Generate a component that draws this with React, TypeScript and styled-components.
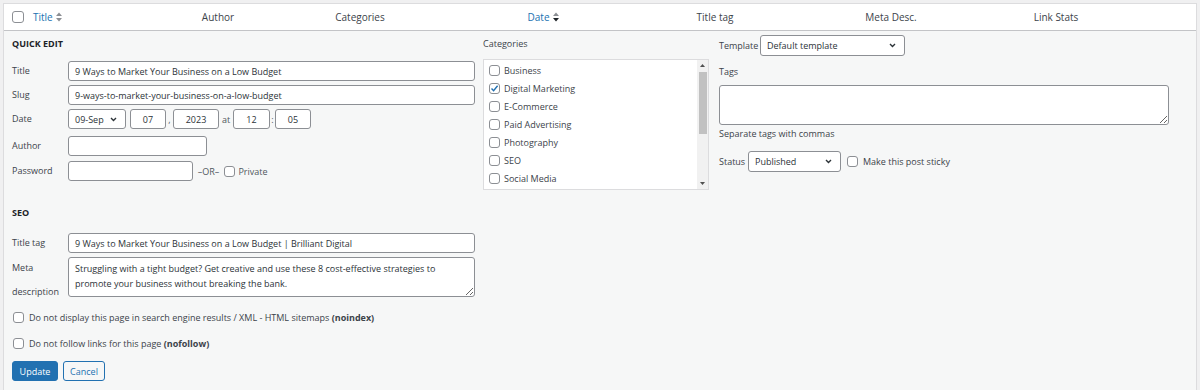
import React from "react"
import styled, { createGlobalStyle } from "styled-components"

const GlobalStyle = createGlobalStyle`
  body {
    margin: 0;
    background: #f0f0f1;
    font-family: "Open Sans", "Noto Sans", sans-serif;
    color: #3c434a;
  }
`

const Table = styled.div`
  margin: 3px 3px 0 3px;
  height: 387px;
  box-sizing: border-box;
  border: 1px solid #dcdcde;
  border-bottom: none;
  display: flex;
  flex-direction: column;
`

const HeaderRow = styled.div`
  display: grid;
  grid-template-columns: 29px 120px 130px 154px 212px 132px 220px 110px 1fr;
  align-items: center;
  height: 26px;
  flex-shrink: 0;
  background: #fff;
  border-bottom: 1px solid #c3c4c7;
  font-size: 10px;
  color: #3c434a;
`

const HeaderCell = styled.div<{ $center?: boolean; $link?: boolean }>`
  display: flex;
  align-items: center;
  justify-content: ${(p) => (p.$center ? "center" : "flex-start")};
  gap: 3px;
  color: ${(p) => (p.$link ? "#2271b1" : "#3c434a")};
`

const CheckCell = styled.div`
  padding-left: 8px;
  display: flex;
  align-items: center;
`

const Panel = styled.div`
  flex: 1;
  background: #f6f7f7;
  padding: 6px 0 0 8px;
  display: flex;
  gap: 8px;
  font-size: 9px;
`

const LeftCol = styled.div`
  width: 463px;
  display: flex;
  flex-direction: column;
`

const MidCol = styled.div`
  width: 226px;
  display: flex;
  flex-direction: column;
`

const RightCol = styled.div`
  width: 450px;
  margin-left: 2px;
  display: flex;
  flex-direction: column;
`

const SectionTitle = styled.div<{ $top?: number; $bottom?: number }>`
  font-weight: 700;
  font-size: 9px;
  line-height: 14px;
  text-transform: uppercase;
  color: #1d2327;
  margin-top: ${(p) => p.$top ?? 0}px;
  margin-bottom: ${(p) => p.$bottom ?? 0}px;
`

const Fields = styled.div`
  display: flex;
  flex-direction: column;
  gap: 4px;
`

const Row = styled.div<{ $top?: number }>`
  display: flex;
  align-items: center;
  margin-top: ${(p) => p.$top ?? 0}px;
`

const Label = styled.span<{ $width?: number }>`
  width: ${(p) => p.$width ?? 56}px;
  flex-shrink: 0;
  color: #3c434a;
  line-height: 14px;
`

const TallLabel = styled(Label)`
  line-height: 24px;
  height: 40px;
  align-self: flex-start;
  margin-top: -1px;
`

const TextInput = styled.input<{ $width?: number; $center?: boolean }>`
  box-sizing: border-box;
  height: 20px;
  width: ${(p) => (p.$width ? `${p.$width}px` : "100%")};
  flex: ${(p) => (p.$width ? "none" : 1)};
  margin: 0;
  padding: 0 6px;
  border: 1px solid #8c8f94;
  border-radius: 3px;
  background: #fff;
  font-family: inherit;
  font-size: 9px;
  color: #2c3338;
  text-align: ${(p) => (p.$center ? "center" : "left")};
  outline: none;
`

const TextArea = styled.textarea<{ $height: number }>`
  box-sizing: border-box;
  height: ${(p) => p.$height}px;
  flex: 1;
  width: 100%;
  margin: 0;
  padding: 3px 6px;
  border: 1px solid #8c8f94;
  border-radius: 3px;
  background: #fff;
  font-family: inherit;
  font-size: 9px;
  line-height: 15px;
  color: #2c3338;
  resize: vertical;
  outline: none;
  overflow: hidden;
`

const SelectBox = styled.div<{ $width: number; $height?: number }>`
  box-sizing: border-box;
  width: ${(p) => p.$width}px;
  height: ${(p) => p.$height ?? 20}px;
  flex-shrink: 0;
  padding: 0 8px 0 6px;
  border: 1px solid #8c8f94;
  border-radius: 3px;
  background: #fff;
  display: flex;
  align-items: center;
  justify-content: space-between;
  color: #2c3338;
`

const Sep = styled.span<{ $width: number }>`
  width: ${(p) => p.$width}px;
  text-align: center;
  flex-shrink: 0;
  color: #50575e;
`

const Box = styled.span<{ $size?: number }>`
  box-sizing: border-box;
  width: ${(p) => p.$size ?? 11}px;
  height: ${(p) => p.$size ?? 11}px;
  flex-shrink: 0;
  border: 1px solid #8c8f94;
  border-radius: 3px;
  background: #fff;
  display: inline-flex;
  align-items: center;
  justify-content: center;
`

const CheckRow = styled.div<{ $top: number }>`
  display: flex;
  align-items: center;
  gap: 5px;
  height: 14px;
  margin-top: ${(p) => p.$top}px;
  padding-left: 1px;
`

const Buttons = styled.div`
  display: flex;
  gap: 5px;
  margin-top: 11px;
`

const Button = styled.button<{ $primary?: boolean; $width: number }>`
  box-sizing: border-box;
  height: 20px;
  width: ${(p) => p.$width}px;
  padding: 0;
  border: 1px solid #2271b1;
  border-radius: 3px;
  background: ${(p) => (p.$primary ? "#2271b1" : "#f6f7f7")};
  color: ${(p) => (p.$primary ? "#fff" : "#2271b1")};
  font-family: inherit;
  font-size: 9px;
`

const CatLabel = styled.div`
  line-height: 14px;
`

const CatBox = styled.div`
  margin-top: 8px;
  height: 131px;
  box-sizing: border-box;
  border: 1px solid #dcdcde;
  background: #fff;
  display: flex;
  overflow: hidden;
`

const CatList = styled.ul`
  list-style: none;
  margin: 0;
  padding: 1px 0 0 5px;
  flex: 1;
`

const CatItem = styled.li`
  height: 18px;
  display: flex;
  align-items: center;
  gap: 4px;
  color: #3c434a;
`

const ScrollTrack = styled.div`
  width: 11px;
  background: #f1f1f1;
  display: flex;
  flex-direction: column;
  align-items: center;
`

const ScrollArrow = styled.div`
  height: 11px;
  display: flex;
  align-items: center;
  justify-content: center;
`

const ScrollThumb = styled.div`
  width: 8px;
  height: 62px;
  background: #c1c1c1;
  margin-top: 1px;
`

const Spacer = styled.div`
  flex: 1;
`

const Help = styled.div`
  line-height: 14px;
  margin-top: 2px;
  color: #3c434a;
`

const Chevron = () => (
  <svg width="7" height="5" viewBox="0 0 7 5">
    <path d="M1 1 L3.5 3.5 L6 1" fill="none" stroke="#2c3338" strokeWidth="1.4" />
  </svg>
)

const Tick = () => (
  <svg width="9" height="9" viewBox="0 0 9 9">
    <path d="M1.5 4.6 L3.6 6.8 L7.6 1.8" fill="none" stroke="#2271b1" strokeWidth="1.4" />
  </svg>
)

const SortIcon = ({ active }: { active?: boolean }) => (
  <svg width="6" height="10" viewBox="0 0 6 10">
    <path d="M0 4 L3 0.5 L6 4 Z" fill="#8c8f94" />
    <path d="M0 6 L3 9.5 L6 6 Z" fill={active ? "#1d2327" : "#8c8f94"} />
  </svg>
)

const Triangle = ({ up }: { up?: boolean }) => (
  <svg width="5" height="3" viewBox="0 0 5 3">
    <path d={up ? "M0 3 L2.5 0 L5 3 Z" : "M0 0 L2.5 3 L5 0 Z"} fill="#505050" />
  </svg>
)

const Checkbox = ({ checked, size }: { checked?: boolean; size?: number }) => (
  <Box $size={size}>{checked && <Tick />}</Box>
)

const categories = [
  { name: "Business" },
  { name: "Digital Marketing", checked: true },
  { name: "E-Commerce" },
  { name: "Paid Advertising" },
  { name: "Photography" },
  { name: "SEO" },
  { name: "Social Media" },
]

export default function App() {
  return (
    <>
      <GlobalStyle />
      <Table>
        <HeaderRow>
          <CheckCell>
            <Checkbox size={12} />
          </CheckCell>
          <HeaderCell $link>
            Title <SortIcon />
          </HeaderCell>
          <HeaderCell $center>Author</HeaderCell>
          <HeaderCell $center>Categories</HeaderCell>
          <HeaderCell $center $link>
            Date <SortIcon active />
          </HeaderCell>
          <HeaderCell $center>Title tag</HeaderCell>
          <HeaderCell $center>Meta Desc.</HeaderCell>
          <HeaderCell $center>Link Stats</HeaderCell>
          <div />
        </HeaderRow>

        <Panel>
          <LeftCol>
            <SectionTitle $bottom={10}>Quick Edit</SectionTitle>
            <Fields>
              <Row>
                <Label>Title</Label>
                <TextInput defaultValue="9 Ways to Market Your Business on a Low Budget" />
              </Row>
              <Row>
                <Label>Slug</Label>
                <TextInput defaultValue="9-ways-to-market-your-business-on-a-low-budget" />
              </Row>
              <Row>
                <Label>Date</Label>
                <SelectBox $width={58}>
                  09-Sep <Chevron />
                </SelectBox>
                <Sep $width={4} />
                <TextInput $width={36} $center defaultValue="07" />
                <Sep $width={7}>,</Sep>
                <TextInput $width={46} $center defaultValue="2023" />
                <Sep $width={14}>at</Sep>
                <TextInput $width={37} $center defaultValue="12" />
                <Sep $width={5}>:</Sep>
                <TextInput $width={36} $center defaultValue="05" />
              </Row>
              <Row $top={3}>
                <Label>Author</Label>
                <TextInput $width={139} />
              </Row>
              <Row $top={1}>
                <Label>Password</Label>
                <TextInput $width={125} />
                <Sep $width={31}>–OR–</Sep>
                <Checkbox />
                <Sep $width={36}>Private</Sep>
              </Row>
            </Fields>

            <SectionTitle $top={25} $bottom={13}>SEO</SectionTitle>
            <Fields>
              <Row>
                <Label>Title tag</Label>
                <TextInput defaultValue="9 Ways to Market Your Business on a Low Budget | Brilliant Digital" />
              </Row>
              <Row>
                <TallLabel>Meta description</TallLabel>
                <TextArea
                  $height={40}
                  defaultValue="Struggling with a tight budget? Get creative and use these 8 cost-effective strategies to promote your business without breaking the bank."
                />
              </Row>
            </Fields>

            <CheckRow $top={13}>
              <Checkbox />
              <span>
                Do not display this page in search engine results / XML - HTML sitemaps <b>(noindex)</b>
              </span>
            </CheckRow>
            <CheckRow $top={12}>
              <Checkbox />
              <span>
                Do not follow links for this page <b>(nofollow)</b>
              </span>
            </CheckRow>

            <Buttons>
              <Button $primary $width={46}>Update</Button>
              <Button $width={42}>Cancel</Button>
            </Buttons>
          </LeftCol>

          <MidCol>
            <CatLabel>Categories</CatLabel>
            <CatBox>
              <CatList>
                {categories.map((c) => (
                  <CatItem key={c.name}>
                    <Checkbox checked={c.checked} />
                    {c.name}
                  </CatItem>
                ))}
              </CatList>
              <ScrollTrack>
                <ScrollArrow>
                  <Triangle up />
                </ScrollArrow>
                <ScrollThumb />
                <Spacer />
                <ScrollArrow>
                  <Triangle />
                </ScrollArrow>
              </ScrollTrack>
            </CatBox>
          </MidCol>

          <RightCol>
            <Row $top={-2}>
              <Label $width={41}>Template</Label>
              <SelectBox $width={145} $height={21}>
                Default template <Chevron />
              </SelectBox>
            </Row>
            <Row $top={9}>
              <Label>Tags</Label>
            </Row>
            <Row $top={6}>
              <TextArea $height={40} />
            </Row>
            <Help>Separate tags with commas</Help>
            <Row $top={10}>
              <Label $width={29}>Status</Label>
              <SelectBox $width={93} $height={21}>
                Published <Chevron />
              </SelectBox>
              <Sep $width={6} />
              <Checkbox />
              <Sep $width={5} />
              <span>Make this post sticky</span>
            </Row>
          </RightCol>
        </Panel>
      </Table>
    </>
  )
}
